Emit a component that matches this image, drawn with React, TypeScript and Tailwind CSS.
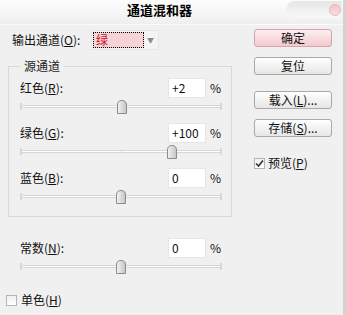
import React from 'react';

const font = { fontFamily: '"Noto Sans CJK SC", "Noto Sans", sans-serif' };

// underlined access key, e.g. (R)
const Key: React.FC<{ k: string }> = ({ k }) => (
  <span>
    (<span className="underline underline-offset-1">{k}</span>)
  </span>
);

const Thumb: React.FC = () => (
  <svg width="10" height="14" viewBox="0 0 10 14">
    <defs>
      <linearGradient id="tg" x1="0" y1="0" x2="1" y2="0">
        <stop offset="0" stopColor="#f4f4f4" />
        <stop offset="1" stopColor="#c4c4c4" />
      </linearGradient>
    </defs>
    <path d="M0.5 5 Q0.5 0.5 5 0.5 Q9.5 0.5 9.5 5 V13.5 H0.5 Z" fill="url(#tg)" stroke="#8c8c8c" />
  </svg>
);

const Slider: React.FC<{ value: number }> = ({ value }) => {
  const pct = ((value + 200) / 400) * 100;
  return (
    <div className="relative h-[25px]">
      <div className="absolute left-0 right-0 top-[7px] h-[3px] border-y border-[#d6d6d6] bg-white" />
      <div className="absolute left-0 top-[5px] h-[7px] w-[2px] bg-[#d8d8d8]" />
      <div className="absolute right-0 top-[5px] h-[7px] w-[2px] bg-[#d8d8d8]" />
      <div className="absolute left-1/2 top-[6px] h-[5px] w-px bg-[#dcdcdc]" />
      <div className="absolute top-[2px] -ml-[5px]" style={{ left: `${pct}%` }}>
        <Thumb />
      </div>
    </div>
  );
};

const ValueRow: React.FC<{ label: string; k: string; value: string }> = ({ label, k, value }) => (
  <div className="flex h-[20px] items-center">
    <div className="flex-1 text-[12px] text-[#111]">
      {label}
      <Key k={k} />:
    </div>
    <div className="flex h-[20px] w-[38px] items-center border border-[#e6e6e6] bg-white pl-[3px] text-[12px] text-[#111]">
      {value}
    </div>
    <div className="w-[16px] pl-[4px] text-[12px] text-[#111]">%</div>
  </div>
);

const Button: React.FC<{ children: React.ReactNode; primary?: boolean }> = ({ children, primary }) => (
  <button
    className={
      primary
        ? 'flex h-[18px] w-[78px] items-center justify-center rounded-[3px] border border-[#d4a4aa] bg-gradient-to-b from-[#fdeef0] to-[#f2c9ce] text-[12px] text-[#111]'
        : 'flex h-[18px] w-[78px] items-center justify-center rounded-[3px] border border-[#a8a8a8] bg-gradient-to-b from-[#ffffff] to-[#e6e6e6] text-[12px] text-[#111]'
    }
  >
    {children}
  </button>
);

const Check: React.FC<{ checked?: boolean }> = ({ checked }) => (
  <div className="flex h-[11px] w-[11px] items-center justify-center border border-[#b4b4b4] bg-gradient-to-b from-[#f0f0f0] to-[#ffffff]">
    {checked && (
      <svg width="9" height="9" viewBox="0 0 9 9">
        <path d="M1 4.5 L3.5 7 L8 1.5" fill="none" stroke="#333" strokeWidth="1.6" />
      </svg>
    )}
  </div>
);

export default function App() {
  return (
    <div className="flex h-[315px] w-[346px] flex-col overflow-hidden border-r-[3px] border-[#d2d2d2] bg-[#f0f0f0]" style={font}>
      {/* title bar */}
      <div className="relative flex h-[25px] shrink-0 items-start justify-center border-b border-[#fafafa] bg-gradient-to-b from-[#fdfdfd] to-[#efefef] pt-[2px]">
        <span className="ml-[-24px] text-[13px] font-bold leading-[16px] text-black">通道混和器</span>
        <div className="absolute right-[1px] top-[1px] flex h-[17px] w-[56px] items-center justify-end rounded-l-full bg-gradient-to-b from-[#e6e6e6] to-[#f8f8f8] pr-[1px]">
          <div className="h-[12px] w-[12px] rounded-full border border-[#e7b8be] bg-gradient-to-b from-[#f4c4ca] to-[#f7dde0]" />
        </div>
      </div>

      <div className="flex flex-1">
        {/* left column */}
        <div className="w-[240px]">
          <div className="mt-[5px] flex h-[20px] items-center pl-[12px]">
            <span className="w-[79px] text-[12px] text-[#111]">
              输出通道<Key k="O" />:
            </span>
            <div className="flex h-[20px] w-[68px] items-center border border-[#e6e6e6] bg-[#f4f4f4] px-[1px]">
              <div className="flex h-[16px] w-[51px] items-center border border-dotted border-black bg-[#f6d4d6] pl-[2px] text-[12px] text-[#c8102e]">
                绿
              </div>
              <span className="ml-[3px] text-[7px] text-[#8a8a8a]">▼</span>
            </div>
          </div>

          <fieldset className="ml-[8px] mt-[9px] w-[224px] border border-[#d9d9d9] pb-[3px] pl-[11px] pr-[9px]">
            <legend className="px-[4px] text-[12px] leading-[14px] text-[#222]">源通道</legend>
            <div className="mt-[5px]">
              <ValueRow label="红色" k="R" value="+2" />
              <Slider value={2} />
              <ValueRow label="绿色" k="G" value="+100" />
              <Slider value={100} />
              <ValueRow label="蓝色" k="B" value="0" />
              <Slider value={0} />
            </div>
          </fieldset>

          <div className="ml-[20px] mt-[21px] w-[202px]">
            <ValueRow label="常数" k="N" value="0" />
            <Slider value={0} />
          </div>

          <div className="ml-[6px] mt-[8px] flex items-center gap-[4px] text-[12px] text-[#111]">
            <Check />
            <span>
              单色<Key k="H" />
            </span>
          </div>
        </div>

        {/* right column */}
        <div className="flex flex-col pl-[14px]">
          <div className="mt-[4px]">
            <Button primary>确定</Button>
          </div>
          <div className="mt-[10px]">
            <Button>复位</Button>
          </div>
          <div className="mt-[16px]">
            <Button>
              载入<Key k="L" />...
            </Button>
          </div>
          <div className="mt-[10px]">
            <Button>
              存储<Key k="S" />...
            </Button>
          </div>
          <div className="mt-[17px] flex items-center gap-[3px] text-[12px] text-[#111]">
            <Check checked />
            <span>
              预览<Key k="P" />
            </span>
          </div>
        </div>
      </div>
    </div>
  );
}
